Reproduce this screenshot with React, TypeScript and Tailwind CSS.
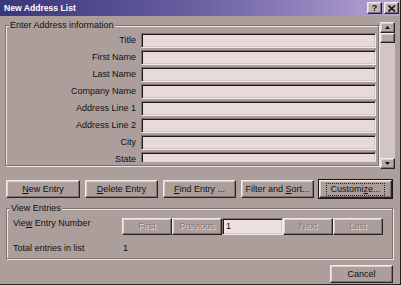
import React from 'react';

const fields = ['Title', 'First Name', 'Last Name', 'Company Name', 'Address Line 1', 'Address Line 2', 'City', 'State'];

const raised =
  'border border-t-[#f2ece8] border-l-[#f2ece8] border-r-[#2a2424] border-b-[#2a2424] shadow-[inset_-1px_-1px_0_#7c7272,inset_1px_1px_0_#d8ceca]';
const sunken =
  'border border-t-[#7c7272] border-l-[#7c7272] border-r-[#f2ece8] border-b-[#f2ece8] shadow-[inset_1px_1px_0_#1e1818,inset_-1px_-1px_0_#d0c6c2]';
const etched = 'border border-[#7c7272] shadow-[inset_1px_1px_0_#eee6e2,1px_1px_0_#eee6e2]';

const Btn = ({ w, children, def }: { w: string; children: React.ReactNode; def?: boolean }) => (
  <div className={`${w} h-[18px] ${def ? 'outline outline-1 outline-[#1a1414]' : ''}`}>
    <div className={`h-full ${raised} flex items-center justify-center`}>
      {def ? (
        <span className="px-[3px] border border-dotted border-[#2a2424] leading-[11px]">{children}</span>
      ) : (
        children
      )}
    </div>
  </div>
);

const NavBtn = ({ label }: { label: string }) => (
  <div className={`w-[50px] h-[17px] ${raised} flex items-center justify-center text-[#857b79] [text-shadow:1px_1px_0_#e4dcd8]`}>
    {label}
  </div>
);

const App = () => {
  return (
    <div
      className="w-[401px] h-[285px] bg-[#ac9e9b] border-r border-b border-r-[#2a2424] border-b-[#2a2424] flex flex-col text-[9px] leading-[11px] text-[#111] overflow-hidden"
      style={{ fontFamily: '"Liberation Sans", Arial, sans-serif' }}
    >
      {/* title bar */}
      <div className="h-[16px] bg-gradient-to-r from-[#3a367a] via-[#6a60a2] to-[#b8a4d6] flex items-center justify-between pl-[4px] pr-[1px]">
        <span className="text-white font-bold text-[8.6px]">New Address List</span>
        <div className="flex gap-[2px]">
          <div className={`w-[15px] h-[12px] bg-[#c2b6b4] ${raised} flex items-center justify-center font-bold text-[9px] leading-none`}>?</div>
          <div className={`w-[15px] h-[12px] bg-[#c2b6b4] ${raised} flex items-center justify-center`}>
            <svg width="8" height="7" viewBox="0 0 8 7">
              <path d="M0.5 0.5 L7 6.5 M7 0.5 L0.5 6.5" stroke="#111" strokeWidth="1.6" />
            </svg>
          </div>
        </div>
      </div>

      {/* address fields */}
      <div className="flex">
        <div className={`relative ml-[5px] mt-[9px] w-[374px] h-[141px] ${etched}`}>
          <span className="absolute left-[3px] top-[-6px] px-[1px] bg-[#ac9e9b]">Enter Address information</span>
          <div className="h-[136px] overflow-hidden pt-[7px]">
            <div className="flex flex-col gap-[2px]">
              {fields.map((f) => (
                <div key={f} className="flex items-center h-[15px]">
                  <span className="w-[131px] text-right pr-[1px]">{f}</span>
                  <div className={`ml-[4px] w-[235px] h-[15px] bg-[#e8dada] ${sunken}`} />
                </div>
              ))}
            </div>
          </div>
        </div>
        <div className="ml-[1px] mt-[6px] w-[15px] h-[147px] flex flex-col bg-[#d2c6c4]">
          <div className={`h-[11px] bg-[#b4a8a6] ${raised} flex items-center justify-center`}>
            <svg width="5" height="3" viewBox="0 0 5 3"><path d="M2.5 0 L5 3 L0 3 Z" fill="#111" /></svg>
          </div>
          <div className={`h-[10px] bg-[#b4a8a6] ${raised}`} />
          <div className="flex-1" />
          <div className={`h-[11px] bg-[#b4a8a6] ${raised} flex items-center justify-center`}>
            <svg width="5" height="3" viewBox="0 0 5 3"><path d="M0 0 L5 0 L2.5 3 Z" fill="#111" /></svg>
          </div>
        </div>
      </div>

      {/* action buttons */}
      <div className="flex gap-[5px] ml-[6px] mt-[11px]">
        <Btn w="w-[74px]"><span><u>N</u>ew Entry</span></Btn>
        <Btn w="w-[73px]"><span><u>D</u>elete Entry</span></Btn>
        <Btn w="w-[73px]"><span><u>F</u>ind Entry ...</span></Btn>
        <Btn w="w-[73px]"><span>Filter and <u>S</u>ort...</span></Btn>
        <Btn w="w-[73px]" def><span>Customi<u>z</u>e...</span></Btn>
      </div>

      {/* view entries */}
      <div className={`relative ml-[6px] mt-[10px] w-[387px] h-[51px] ${etched}`}>
        <span className="absolute left-[3px] top-[-6px] px-[1px] bg-[#ac9e9b]">View Entries</span>
        <div className="flex pt-[9px]">
          <span className="w-[115px] pl-[6px]">Vie<u>w</u> Entry Number</span>
          <NavBtn label="First" />
          <NavBtn label="Previous" />
          <div className={`w-[61px] h-[17px] bg-[#ece0e0] ${sunken} flex items-center pl-[3px]`}>1</div>
          <NavBtn label="Next" />
          <NavBtn label="Last" />
        </div>
        <div className="flex mt-[8px]">
          <span className="w-[115px] pl-[6px]">Total entries in list</span>
          <span className="pl-[1px]">1</span>
        </div>
      </div>

      {/* cancel */}
      <div className="flex justify-end pr-[7px] mt-[6px]">
        <div className={`w-[63px] h-[18px] ${raised} flex items-center justify-center`}>Cancel</div>
      </div>
    </div>
  );
};

export default App;
